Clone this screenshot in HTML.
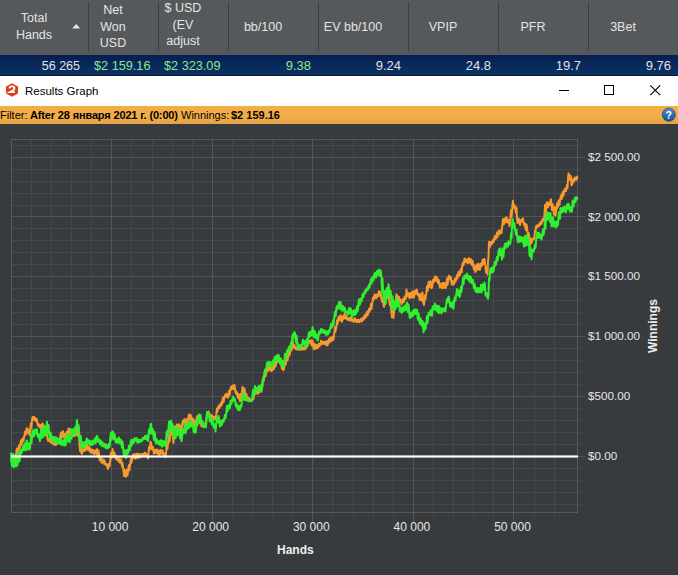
<!DOCTYPE html>
<html><head><meta charset="utf-8"><style>
*{margin:0;padding:0;box-sizing:border-box}
html,body{width:678px;height:575px;overflow:hidden;background:#383b3e;font-family:"Liberation Sans",sans-serif}
.abs{position:absolute}
#hdr{position:absolute;left:0;top:0;width:678px;height:55px;background:#56595b}
.sep{position:absolute;top:2px;width:1px;height:49px;background:#3b3e40}
.ht{position:absolute;color:#e4e4e4;font-size:12.5px;text-align:center;line-height:16.6px;white-space:nowrap}
#row{position:absolute;left:0;top:55px;width:678px;height:21px;background:linear-gradient(#061f52,#0c3264);border-bottom:1px solid #0a1b33}
.dt{position:absolute;top:3px;font-size:13px;color:#e2e2e2;line-height:15px;text-align:right}
.gr{color:#8ee68e}
#title{position:absolute;left:0;top:76px;width:678px;height:30px;background:#fff}
#filter{position:absolute;left:0;top:106px;width:678px;height:18px;background:linear-gradient(#f2ad46,#f2ad48 60%,#e6a244);font-size:11px;color:#000;line-height:18px;white-space:nowrap}
.yl{position:absolute;left:588px;font-size:11.7px;color:#e6e6e6;line-height:14px;white-space:nowrap}
.xl{position:absolute;top:520px;width:60px;text-align:center;font-size:12px;color:#e6e6e6;line-height:14px}
</style></head><body>
<div id="hdr">
  <div class="sep" style="left:88px"></div>
  <div class="sep" style="left:158px"></div>
  <div class="sep" style="left:228px"></div>
  <div class="sep" style="left:318px"></div>
  <div class="sep" style="left:408px"></div>
  <div class="sep" style="left:498px"></div>
  <div class="sep" style="left:588px"></div>
  <div class="ht" style="left:0px;top:10px;width:68px">Total<br>Hands</div>
  <svg class="abs" style="left:71px;top:23px" width="10" height="6"><path d="M1.2,5.5 L5.2,1 L9.2,5.5 Z" fill="#e8e8e8"/></svg>
  <div class="ht" style="left:88px;top:2px;width:50px">Net<br>Won<br>USD</div>
  <div class="ht" style="left:158px;top:0px;width:50px">$ USD<br>(EV<br>adjust</div>
  <div class="ht" style="left:228px;top:19px;width:70px">bb/100</div>
  <div class="ht" style="left:318px;top:19px;width:70px">EV bb/100</div>
  <div class="ht" style="left:408px;top:19px;width:70px">VPIP</div>
  <div class="ht" style="left:498px;top:19px;width:70px">PFR</div>
  <div class="ht" style="left:588px;top:19px;width:70px">3Bet</div>
</div>
<div id="row">
  <div class="dt" style="left:0;width:80px;font-size:12.5px;top:4px">56 265</div>
  <div class="dt gr" style="left:94px;text-align:left;font-size:12.7px;top:4px">$2 159.16</div>
  <div class="dt gr" style="left:164px;text-align:left;font-size:12.7px;top:4px">$2 323.09</div>
  <div class="dt gr" style="left:228px;width:83px">9.38</div>
  <div class="dt" style="left:318px;width:83px">9.24</div>
  <div class="dt" style="left:408px;width:83px">24.8</div>
  <div class="dt" style="left:498px;width:83px">19.7</div>
  <div class="dt" style="left:588px;width:83px">9.76</div>
</div>
<div id="title">
  <svg class="abs" style="left:5px;top:6px" width="14" height="16" viewBox="0 0 14 16">
    <path d="M7,1.2 L13,4.5 L13,11.4 L7,14.7 L1,11.4 L1,4.5 Z" fill="#d83f17"/>
    <path d="M4.4,6.4 Q4.5,4.3 7,4.3 Q9.5,4.3 9.5,6.3 Q9.5,7.6 7.3,8.8 L4.8,10.2 L9.9,10.2" fill="none" stroke="#fff" stroke-width="1.8" stroke-linejoin="miter"/>
  </svg>
  <div class="abs" style="left:25px;top:8px;font-size:11.5px;color:#000;line-height:14px">Results Graph</div>
  <svg class="abs" style="left:552px;top:7px" width="20" height="14"><line x1="7" y1="7.5" x2="17" y2="7.5" stroke="#000" stroke-width="1"/></svg>
  <svg class="abs" style="left:602px;top:7px" width="14" height="14"><rect x="2.5" y="2.5" width="9" height="9" fill="none" stroke="#000" stroke-width="1"/></svg>
  <svg class="abs" style="left:648px;top:7px" width="14" height="14"><path d="M2.3,2.3 L12.2,12.2 M12.2,2.3 L2.3,12.2" stroke="#000" stroke-width="1.1"/></svg>
</div>
<div id="filter">
  <span class="abs" style="left:0px">Filter:</span>
  <span class="abs" style="left:30px;font-weight:bold;letter-spacing:-0.15px">After 28 января 2021 г. (0:00)</span>
  <span class="abs" style="left:181px">Winnings:</span>
  <span class="abs" style="left:231px;font-weight:bold">$2 159.16</span>
  <svg class="abs" style="left:661px;top:1px" width="16" height="16" viewBox="0 0 16 16">
    <defs><linearGradient id="hg" x1="0" y1="0" x2="0" y2="1"><stop offset="0" stop-color="#4d8fd6"/><stop offset="1" stop-color="#134e93"/></linearGradient></defs>
    <circle cx="7.8" cy="7.7" r="6.6" fill="url(#hg)" stroke="#0d3b73" stroke-width="0.6"/>
    <text x="7.8" y="11.6" text-anchor="middle" font-family="Liberation Sans" font-weight="bold" font-size="10.5" fill="#fff">?</text>
  </svg>
</div>
<svg class="abs" style="left:0;top:0" width="678" height="575">
  <line x1="11" y1="504.5" x2="581" y2="504.5" stroke="#45484b" stroke-width="1"/><line x1="11" y1="492.5" x2="581" y2="492.5" stroke="#45484b" stroke-width="1"/><line x1="11" y1="480.5" x2="581" y2="480.5" stroke="#45484b" stroke-width="1"/><line x1="11" y1="468.5" x2="581" y2="468.5" stroke="#45484b" stroke-width="1"/><line x1="11" y1="456.5" x2="585" y2="456.5" stroke="#52565a" stroke-width="1"/><line x1="11" y1="444.5" x2="581" y2="444.5" stroke="#45484b" stroke-width="1"/><line x1="11" y1="432.5" x2="581" y2="432.5" stroke="#45484b" stroke-width="1"/><line x1="11" y1="420.5" x2="581" y2="420.5" stroke="#45484b" stroke-width="1"/><line x1="11" y1="408.5" x2="581" y2="408.5" stroke="#45484b" stroke-width="1"/><line x1="11" y1="396.5" x2="585" y2="396.5" stroke="#52565a" stroke-width="1"/><line x1="11" y1="384.5" x2="581" y2="384.5" stroke="#45484b" stroke-width="1"/><line x1="11" y1="372.5" x2="581" y2="372.5" stroke="#45484b" stroke-width="1"/><line x1="11" y1="360.5" x2="581" y2="360.5" stroke="#45484b" stroke-width="1"/><line x1="11" y1="348.5" x2="581" y2="348.5" stroke="#45484b" stroke-width="1"/><line x1="11" y1="336.5" x2="585" y2="336.5" stroke="#52565a" stroke-width="1"/><line x1="11" y1="324.5" x2="581" y2="324.5" stroke="#45484b" stroke-width="1"/><line x1="11" y1="312.5" x2="581" y2="312.5" stroke="#45484b" stroke-width="1"/><line x1="11" y1="300.5" x2="581" y2="300.5" stroke="#45484b" stroke-width="1"/><line x1="11" y1="288.5" x2="581" y2="288.5" stroke="#45484b" stroke-width="1"/><line x1="11" y1="276.5" x2="585" y2="276.5" stroke="#52565a" stroke-width="1"/><line x1="11" y1="264.5" x2="581" y2="264.5" stroke="#45484b" stroke-width="1"/><line x1="11" y1="252.5" x2="581" y2="252.5" stroke="#45484b" stroke-width="1"/><line x1="11" y1="240.5" x2="581" y2="240.5" stroke="#45484b" stroke-width="1"/><line x1="11" y1="228.5" x2="581" y2="228.5" stroke="#45484b" stroke-width="1"/><line x1="11" y1="216.5" x2="585" y2="216.5" stroke="#52565a" stroke-width="1"/><line x1="11" y1="205.5" x2="581" y2="205.5" stroke="#45484b" stroke-width="1"/><line x1="11" y1="193.5" x2="581" y2="193.5" stroke="#45484b" stroke-width="1"/><line x1="11" y1="181.5" x2="581" y2="181.5" stroke="#45484b" stroke-width="1"/><line x1="11" y1="169.5" x2="581" y2="169.5" stroke="#45484b" stroke-width="1"/><line x1="11" y1="157.5" x2="585" y2="157.5" stroke="#52565a" stroke-width="1"/><line x1="11" y1="145.5" x2="581" y2="145.5" stroke="#45484b" stroke-width="1"/><line x1="31.5" y1="139" x2="31.5" y2="517" stroke="#45484b" stroke-width="1"/><line x1="51.5" y1="139" x2="51.5" y2="517" stroke="#45484b" stroke-width="1"/><line x1="71.5" y1="139" x2="71.5" y2="517" stroke="#45484b" stroke-width="1"/><line x1="91.5" y1="139" x2="91.5" y2="517" stroke="#45484b" stroke-width="1"/><line x1="111.5" y1="139" x2="111.5" y2="521" stroke="#52565a" stroke-width="1"/><line x1="131.5" y1="139" x2="131.5" y2="517" stroke="#45484b" stroke-width="1"/><line x1="152.5" y1="139" x2="152.5" y2="517" stroke="#45484b" stroke-width="1"/><line x1="172.5" y1="139" x2="172.5" y2="517" stroke="#45484b" stroke-width="1"/><line x1="192.5" y1="139" x2="192.5" y2="517" stroke="#45484b" stroke-width="1"/><line x1="212.5" y1="139" x2="212.5" y2="521" stroke="#52565a" stroke-width="1"/><line x1="232.5" y1="139" x2="232.5" y2="517" stroke="#45484b" stroke-width="1"/><line x1="252.5" y1="139" x2="252.5" y2="517" stroke="#45484b" stroke-width="1"/><line x1="272.5" y1="139" x2="272.5" y2="517" stroke="#45484b" stroke-width="1"/><line x1="292.5" y1="139" x2="292.5" y2="517" stroke="#45484b" stroke-width="1"/><line x1="312.5" y1="139" x2="312.5" y2="521" stroke="#52565a" stroke-width="1"/><line x1="332.5" y1="139" x2="332.5" y2="517" stroke="#45484b" stroke-width="1"/><line x1="353.5" y1="139" x2="353.5" y2="517" stroke="#45484b" stroke-width="1"/><line x1="373.5" y1="139" x2="373.5" y2="517" stroke="#45484b" stroke-width="1"/><line x1="393.5" y1="139" x2="393.5" y2="517" stroke="#45484b" stroke-width="1"/><line x1="413.5" y1="139" x2="413.5" y2="521" stroke="#52565a" stroke-width="1"/><line x1="433.5" y1="139" x2="433.5" y2="517" stroke="#45484b" stroke-width="1"/><line x1="453.5" y1="139" x2="453.5" y2="517" stroke="#45484b" stroke-width="1"/><line x1="473.5" y1="139" x2="473.5" y2="517" stroke="#45484b" stroke-width="1"/><line x1="493.5" y1="139" x2="493.5" y2="517" stroke="#45484b" stroke-width="1"/><line x1="513.5" y1="139" x2="513.5" y2="521" stroke="#52565a" stroke-width="1"/><line x1="534.5" y1="139" x2="534.5" y2="517" stroke="#45484b" stroke-width="1"/><line x1="554.5" y1="139" x2="554.5" y2="517" stroke="#45484b" stroke-width="1"/>
  <rect x="11.5" y="139.5" width="566" height="373" fill="none" stroke="#55595c" stroke-width="1"/>
  <path d="M11.0,457.6 L11.5,460.5 L12.0,460.6 L12.5,457.5 L13.0,459.1 L13.5,461.5 L14.0,461.0 L14.5,459.3 L15.0,455.3 L15.5,459.2 L16.0,454.8 L16.5,450.6 L17.0,448.6 L17.5,451.9 L18.0,449.9 L18.5,447.6 L19.0,445.4 L19.5,449.7 L20.0,445.6 L20.5,442.7 L21.0,440.2 L21.5,444.7 L22.0,442.7 L22.5,438.8 L23.0,438.1 L23.5,441.0 L24.0,437.9 L24.5,435.3 L25.0,431.7 L25.5,434.9 L26.0,433.5 L26.5,428.9 L27.0,428.0 L27.5,432.8 L28.0,433.3 L28.5,430.7 L29.0,429.6 L29.5,435.1 L30.0,431.8 L30.5,427.0 L31.0,422.9 L31.5,428.2 L32.0,419.9 L32.5,417.3 L33.0,416.7 L33.5,418.5 L34.0,419.9 L34.5,417.2 L35.0,417.8 L35.5,420.9 L36.0,420.9 L36.5,418.7 L37.0,420.7 L37.5,423.9 L38.0,425.7 L38.5,424.0 L39.0,424.5 L39.5,427.3 L40.0,427.7 L40.5,425.5 L41.0,424.7 L41.5,428.1 L42.0,428.3 L42.5,423.6 L43.0,424.5 L43.5,428.0 L44.0,430.9 L44.5,426.7 L45.0,428.0 L45.5,433.3 L46.0,435.0 L46.5,429.6 L47.0,435.1 L47.5,439.1 L48.0,440.7 L48.5,438.8 L49.0,439.5 L49.5,440.6 L50.0,441.8 L50.5,439.9 L51.0,440.7 L51.5,443.0 L52.0,442.9 L52.5,441.5 L53.0,442.3 L53.5,444.5 L54.0,444.6 L54.5,443.6 L55.0,443.8 L55.5,445.0 L56.0,445.1 L56.5,443.2 L57.0,442.5 L57.5,443.9 L58.0,443.2 L58.5,440.9 L59.0,438.6 L59.5,440.9 L60.0,438.2 L60.5,435.1 L61.0,432.4 L61.5,438.1 L62.0,436.7 L62.5,432.2 L63.0,431.3 L63.5,434.8 L64.0,437.2 L64.5,433.9 L65.0,435.5 L65.5,439.4 L66.0,437.0 L66.5,432.2 L67.0,431.9 L67.5,434.4 L68.0,434.3 L68.5,428.4 L69.0,429.3 L69.5,433.4 L70.0,433.2 L70.5,429.3 L71.0,432.3 L71.5,436.2 L72.0,435.9 L72.5,432.8 L73.0,432.8 L73.5,436.2 L74.0,435.7 L74.5,433.7 L75.0,430.9 L75.5,435.5 L76.0,434.5 L76.5,430.1 L77.0,427.1 L77.5,431.6 L78.0,436.0 L78.5,428.8 L79.0,436.0 L79.5,444.6 L80.0,450.9 L80.5,445.0 L81.0,449.6 L81.5,453.4 L82.0,453.9 L82.5,450.0 L83.0,449.9 L83.5,451.2 L84.0,450.8 L84.5,447.5 L85.0,446.6 L85.5,450.6 L86.0,448.8 L86.5,445.3 L87.0,444.0 L87.5,448.0 L88.0,450.1 L88.5,447.1 L89.0,446.9 L89.5,450.2 L90.0,451.9 L90.5,448.6 L91.0,450.2 L91.5,453.0 L92.0,451.7 L92.5,449.8 L93.0,449.8 L93.5,452.7 L94.0,454.2 L94.5,451.3 L95.0,450.6 L95.5,452.8 L96.0,453.7 L96.5,449.7 L97.0,449.1 L97.5,455.2 L98.0,455.2 L98.5,450.4 L99.0,454.5 L99.5,458.9 L100.0,460.6 L100.5,457.6 L101.0,458.9 L101.5,462.7 L102.0,462.8 L102.5,459.0 L103.0,460.7 L103.5,462.5 L104.0,463.8 L104.5,460.3 L105.0,462.7 L105.5,464.5 L106.0,465.3 L106.5,463.9 L107.0,464.6 L107.5,467.5 L108.0,469.0 L108.5,464.8 L109.0,463.7 L109.5,466.3 L110.0,461.8 L110.5,457.1 L111.0,452.5 L111.5,458.6 L112.0,454.5 L112.5,448.9 L113.0,451.6 L113.5,455.5 L114.0,456.9 L114.5,452.7 L115.0,455.4 L115.5,458.0 L116.0,459.2 L116.5,456.0 L117.0,457.2 L117.5,459.9 L118.0,460.7 L118.5,457.9 L119.0,458.8 L119.5,462.2 L120.0,462.6 L120.5,459.7 L121.0,459.0 L121.5,462.7 L122.0,466.5 L122.5,463.0 L123.0,467.5 L123.5,470.3 L124.0,475.9 L124.5,469.6 L125.0,470.9 L125.5,476.2 L126.0,476.7 L126.5,471.5 L127.0,469.4 L127.5,475.5 L128.0,471.3 L128.5,467.6 L129.0,464.9 L129.5,470.2 L130.0,465.0 L130.5,461.9 L131.0,458.5 L131.5,462.9 L132.0,459.8 L132.5,457.1 L133.0,454.8 L133.5,458.0 L134.0,458.0 L134.5,454.1 L135.0,454.3 L135.5,459.0 L136.0,456.8 L136.5,454.9 L137.0,453.6 L137.5,457.8 L138.0,458.2 L138.5,453.7 L139.0,455.0 L139.5,456.8 L140.0,457.4 L140.5,453.9 L141.0,454.4 L141.5,456.2 L142.0,455.4 L142.5,454.2 L143.0,453.9 L143.5,455.7 L144.0,454.7 L144.5,453.1 L145.0,452.6 L145.5,455.5 L146.0,456.1 L146.5,453.7 L147.0,454.0 L147.5,456.6 L148.0,458.5 L148.5,453.4 L149.0,447.0 L149.5,449.8 L150.0,448.1 L150.5,441.8 L151.0,443.0 L151.5,447.8 L152.0,449.6 L152.5,446.7 L153.0,446.8 L153.5,450.7 L154.0,453.5 L154.5,450.0 L155.0,449.9 L155.5,453.0 L156.0,451.9 L156.5,449.8 L157.0,449.4 L157.5,453.2 L158.0,454.3 L158.5,450.6 L159.0,450.8 L159.5,454.9 L160.0,453.2 L160.5,449.8 L161.0,451.0 L161.5,453.7 L162.0,451.8 L162.5,450.3 L163.0,452.0 L163.5,453.8 L164.0,456.2 L164.5,453.8 L165.0,454.7 L165.5,457.1 L166.0,454.1 L166.5,448.0 L167.0,444.8 L167.5,448.7 L168.0,443.1 L168.5,438.4 L169.0,435.9 L169.5,441.7 L170.0,437.4 L170.5,429.1 L171.0,428.0 L171.5,433.4 L172.0,434.8 L172.5,429.3 L173.0,437.2 L173.5,442.9 L174.0,433.6 L174.5,430.8 L175.0,426.4 L175.5,429.0 L176.0,427.3 L176.5,425.4 L177.0,424.4 L177.5,427.3 L178.0,427.3 L178.5,424.9 L179.0,424.3 L179.5,426.3 L180.0,429.8 L180.5,426.1 L181.0,427.8 L181.5,431.4 L182.0,425.6 L182.5,422.3 L183.0,420.6 L183.5,423.9 L184.0,421.2 L184.5,419.0 L185.0,420.3 L185.5,422.9 L186.0,423.3 L186.5,420.6 L187.0,419.1 L187.5,422.4 L188.0,421.3 L188.5,416.6 L189.0,414.4 L189.5,419.3 L190.0,418.1 L190.5,414.8 L191.0,415.9 L191.5,419.4 L192.0,421.8 L192.5,418.6 L193.0,418.4 L193.5,421.3 L194.0,423.9 L194.5,420.6 L195.0,423.4 L195.5,425.6 L196.0,422.6 L196.5,420.2 L197.0,416.2 L197.5,419.5 L198.0,419.0 L198.5,415.3 L199.0,418.6 L199.5,421.5 L200.0,423.6 L200.5,419.5 L201.0,423.5 L201.5,426.2 L202.0,426.4 L202.5,425.7 L203.0,425.2 L203.5,427.2 L204.0,427.0 L204.5,424.9 L205.0,423.4 L205.5,425.3 L206.0,421.5 L206.5,418.6 L207.0,414.8 L207.5,416.3 L208.0,415.2 L208.5,411.6 L209.0,412.9 L209.5,415.6 L210.0,416.9 L210.5,414.5 L211.0,415.2 L211.5,417.0 L212.0,418.0 L212.5,415.7 L213.0,416.6 L213.5,418.2 L214.0,419.1 L214.5,417.0 L215.0,417.3 L215.5,419.5 L216.0,417.0 L216.5,411.9 L217.0,408.4 L217.5,411.7 L218.0,408.4 L218.5,406.1 L219.0,405.3 L219.5,408.1 L220.0,406.9 L220.5,404.4 L221.0,402.7 L221.5,405.4 L222.0,404.3 L222.5,400.1 L223.0,397.7 L223.5,402.2 L224.0,399.9 L224.5,396.3 L225.0,394.9 L225.5,397.0 L226.0,396.6 L226.5,393.6 L227.0,394.8 L227.5,397.3 L228.0,397.7 L228.5,396.0 L229.0,391.0 L229.5,395.5 L230.0,391.8 L230.5,388.5 L231.0,386.8 L231.5,389.6 L232.0,388.7 L232.5,386.0 L233.0,385.4 L233.5,388.2 L234.0,389.4 L234.5,385.1 L235.0,388.7 L235.5,391.8 L236.0,393.7 L236.5,391.7 L237.0,392.6 L237.5,396.0 L238.0,398.0 L238.5,394.0 L239.0,395.1 L239.5,399.7 L240.0,401.3 L240.5,396.5 L241.0,393.8 L241.5,397.8 L242.0,391.4 L242.5,387.0 L243.0,388.3 L243.5,391.6 L244.0,394.4 L244.5,388.6 L245.0,392.5 L245.5,397.0 L246.0,400.1 L246.5,393.9 L247.0,397.0 L247.5,399.5 L248.0,400.4 L248.5,397.8 L249.0,398.9 L249.5,401.2 L250.0,401.1 L250.5,399.1 L251.0,399.6 L251.5,400.7 L252.0,400.4 L252.5,398.3 L253.0,396.9 L253.5,399.4 L254.0,393.6 L254.5,391.6 L255.0,392.2 L255.5,393.9 L256.0,393.6 L256.5,392.6 L257.0,390.7 L257.5,393.2 L258.0,393.7 L258.5,388.3 L259.0,389.8 L259.5,392.3 L260.0,391.6 L260.5,389.0 L261.0,388.7 L261.5,391.7 L262.0,388.6 L262.5,385.8 L263.0,377.4 L263.5,381.6 L264.0,378.3 L264.5,374.3 L265.0,371.8 L265.5,376.6 L266.0,374.1 L266.5,370.0 L267.0,368.5 L267.5,371.4 L268.0,370.2 L268.5,366.7 L269.0,363.6 L269.5,368.0 L270.0,370.2 L270.5,366.1 L271.0,367.3 L271.5,371.0 L272.0,370.8 L272.5,367.8 L273.0,367.0 L273.5,369.5 L274.0,368.6 L274.5,364.0 L275.0,362.5 L275.5,366.4 L276.0,364.3 L276.5,362.0 L277.0,360.1 L277.5,362.2 L278.0,360.7 L278.5,358.8 L279.0,358.3 L279.5,361.8 L280.0,363.4 L280.5,359.9 L281.0,363.5 L281.5,366.2 L282.0,368.9 L282.5,365.1 L283.0,366.6 L283.5,370.3 L284.0,368.8 L284.5,365.1 L285.0,361.0 L285.5,364.7 L286.0,362.2 L286.5,359.0 L287.0,355.3 L287.5,360.5 L288.0,358.1 L288.5,355.3 L289.0,352.3 L289.5,355.4 L290.0,352.3 L290.5,349.6 L291.0,345.1 L291.5,350.3 L292.0,345.6 L292.5,339.2 L293.0,343.6 L293.5,347.5 L294.0,347.4 L294.5,345.0 L295.0,347.9 L295.5,348.9 L296.0,349.4 L296.5,347.4 L297.0,347.5 L297.5,349.6 L298.0,349.4 L298.5,348.0 L299.0,348.0 L299.5,349.9 L300.0,349.2 L300.5,347.8 L301.0,348.1 L301.5,349.8 L302.0,349.6 L302.5,347.8 L303.0,347.5 L303.5,349.1 L304.0,349.6 L304.5,347.8 L305.0,346.7 L305.5,348.7 L306.0,348.6 L306.5,345.9 L307.0,343.0 L307.5,346.3 L308.0,343.3 L308.5,340.6 L309.0,340.7 L309.5,342.4 L310.0,342.8 L310.5,341.1 L311.0,340.1 L311.5,345.1 L312.0,345.7 L312.5,340.6 L313.0,343.3 L313.5,347.8 L314.0,349.4 L314.5,343.8 L315.0,344.4 L315.5,348.5 L316.0,348.7 L316.5,344.7 L317.0,346.4 L317.5,348.1 L318.0,347.7 L318.5,345.1 L319.0,343.7 L319.5,346.1 L320.0,345.1 L320.5,343.5 L321.0,340.8 L321.5,344.4 L322.0,343.1 L322.5,341.5 L323.0,341.5 L323.5,343.9 L324.0,343.1 L324.5,342.0 L325.0,341.7 L325.5,344.1 L326.0,345.0 L326.5,341.5 L327.0,341.0 L327.5,345.5 L328.0,343.7 L328.5,340.9 L329.0,339.0 L329.5,342.5 L330.0,340.7 L330.5,337.4 L331.0,338.2 L331.5,341.0 L332.0,340.2 L332.5,336.8 L333.0,336.5 L333.5,339.8 L334.0,334.9 L334.5,331.7 L335.0,327.0 L335.5,331.7 L336.0,328.5 L336.5,325.9 L337.0,320.2 L337.5,324.2 L338.0,320.2 L338.5,317.1 L339.0,316.6 L339.5,320.4 L340.0,320.2 L340.5,315.3 L341.0,316.4 L341.5,319.8 L342.0,321.9 L342.5,317.3 L343.0,316.3 L343.5,319.2 L344.0,316.2 L344.5,313.6 L345.0,315.4 L345.5,318.4 L346.0,318.7 L346.5,315.8 L347.0,318.8 L347.5,319.7 L348.0,320.0 L348.5,318.4 L349.0,318.0 L349.5,320.5 L350.0,320.1 L350.5,317.4 L351.0,318.4 L351.5,320.7 L352.0,320.8 L352.5,319.3 L353.0,319.5 L353.5,321.9 L354.0,321.0 L354.5,318.6 L355.0,318.1 L355.5,320.6 L356.0,322.0 L356.5,319.9 L357.0,319.8 L357.5,321.5 L358.0,322.0 L358.5,319.7 L359.0,320.0 L359.5,322.2 L360.0,321.1 L360.5,320.1 L361.0,318.9 L361.5,321.4 L362.0,321.4 L362.5,318.5 L363.0,317.5 L363.5,319.8 L364.0,318.4 L364.5,315.6 L365.0,314.8 L365.5,317.7 L366.0,316.3 L366.5,313.5 L367.0,311.7 L367.5,315.4 L368.0,314.4 L368.5,311.1 L369.0,308.7 L369.5,311.8 L370.0,309.7 L370.5,307.8 L371.0,303.7 L371.5,308.9 L372.0,303.6 L372.5,301.8 L373.0,297.5 L373.5,299.6 L374.0,298.9 L374.5,295.0 L375.0,294.4 L375.5,297.4 L376.0,298.3 L376.5,295.4 L377.0,294.6 L377.5,297.1 L378.0,296.1 L378.5,293.3 L379.0,290.9 L379.5,294.5 L380.0,295.9 L380.5,292.4 L381.0,295.2 L381.5,299.1 L382.0,301.8 L382.5,297.8 L383.0,299.3 L383.5,304.7 L384.0,306.9 L384.5,303.0 L385.0,296.6 L385.5,303.2 L386.0,297.6 L386.5,294.1 L387.0,294.3 L387.5,297.3 L388.0,298.3 L388.5,295.2 L389.0,297.9 L389.5,303.0 L390.0,305.4 L390.5,302.4 L391.0,307.0 L391.5,313.0 L392.0,317.3 L392.5,311.1 L393.0,313.2 L393.5,318.0 L394.0,311.9 L394.5,307.8 L395.0,302.0 L395.5,307.0 L396.0,298.6 L396.5,294.2 L397.0,296.2 L397.5,299.9 L398.0,299.9 L398.5,296.4 L399.0,296.9 L399.5,300.4 L400.0,302.2 L400.5,299.6 L401.0,301.2 L401.5,304.5 L402.0,302.8 L402.5,301.3 L403.0,298.7 L403.5,302.3 L404.0,301.8 L404.5,297.0 L405.0,296.2 L405.5,299.1 L406.0,297.1 L406.5,289.5 L407.0,293.7 L407.5,295.5 L408.0,296.3 L408.5,292.9 L409.0,295.0 L409.5,298.2 L410.0,298.1 L410.5,293.1 L411.0,294.0 L411.5,295.9 L412.0,297.6 L412.5,291.3 L413.0,292.8 L413.5,296.5 L414.0,297.5 L414.5,291.7 L415.0,290.7 L415.5,294.1 L416.0,292.6 L416.5,289.5 L417.0,290.3 L417.5,293.3 L418.0,295.6 L418.5,293.8 L419.0,294.8 L419.5,299.0 L420.0,300.1 L420.5,295.3 L421.0,293.8 L421.5,299.0 L422.0,300.6 L422.5,292.6 L423.0,300.0 L423.5,303.4 L424.0,304.9 L424.5,301.0 L425.0,295.4 L425.5,298.9 L426.0,294.7 L426.5,291.9 L427.0,286.3 L427.5,291.2 L428.0,288.1 L428.5,282.4 L429.0,281.7 L429.5,284.7 L430.0,287.0 L430.5,281.2 L431.0,284.5 L431.5,288.3 L432.0,287.5 L432.5,283.8 L433.0,279.8 L433.5,282.6 L434.0,281.1 L434.5,278.1 L435.0,276.5 L435.5,280.8 L436.0,280.4 L436.5,276.7 L437.0,277.9 L437.5,281.5 L438.0,283.1 L438.5,279.5 L439.0,281.4 L439.5,285.9 L440.0,287.4 L440.5,284.6 L441.0,283.6 L441.5,286.7 L442.0,288.3 L442.5,284.4 L443.0,282.9 L443.5,286.6 L444.0,287.9 L444.5,282.8 L445.0,285.0 L445.5,288.2 L446.0,286.6 L446.5,283.8 L447.0,278.4 L447.5,284.9 L448.0,281.9 L448.5,276.8 L449.0,275.6 L449.5,279.4 L450.0,278.8 L450.5,276.9 L451.0,277.8 L451.5,283.1 L452.0,284.6 L452.5,281.1 L453.0,281.3 L453.5,284.6 L454.0,284.1 L454.5,281.7 L455.0,278.7 L455.5,281.7 L456.0,279.8 L456.5,277.6 L457.0,274.9 L457.5,278.4 L458.0,275.1 L458.5,271.8 L459.0,272.4 L459.5,275.6 L460.0,274.6 L460.5,270.3 L461.0,268.8 L461.5,272.6 L462.0,267.6 L462.5,263.8 L463.0,262.5 L463.5,265.4 L464.0,262.0 L464.5,258.5 L465.0,259.2 L465.5,262.1 L466.0,261.9 L466.5,259.4 L467.0,259.2 L467.5,263.2 L468.0,262.9 L468.5,260.1 L469.0,257.9 L469.5,261.7 L470.0,262.8 L470.5,260.3 L471.0,259.2 L471.5,264.5 L472.0,264.9 L472.5,260.8 L473.0,262.9 L473.5,267.7 L474.0,269.6 L474.5,265.5 L475.0,269.1 L475.5,272.0 L476.0,271.2 L476.5,266.5 L477.0,264.3 L477.5,269.4 L478.0,267.5 L478.5,263.7 L479.0,264.5 L479.5,269.8 L480.0,269.9 L480.5,266.7 L481.0,263.5 L481.5,266.1 L482.0,265.3 L482.5,260.1 L483.0,259.5 L483.5,264.0 L484.0,264.0 L484.5,259.1 L485.0,262.7 L485.5,266.8 L486.0,272.4 L486.5,268.1 L487.0,269.8 L487.5,274.4 L488.0,261.8 L488.5,256.8 L489.0,241.7 L489.5,247.5 L490.0,246.5 L490.5,242.4 L491.0,241.9 L491.5,244.3 L492.0,244.2 L492.5,241.2 L493.0,239.8 L493.5,242.2 L494.0,240.6 L494.5,237.6 L495.0,236.1 L495.5,239.1 L496.0,238.3 L496.5,235.3 L497.0,232.6 L497.5,237.0 L498.0,234.1 L498.5,231.4 L499.0,230.6 L499.5,234.2 L500.0,233.3 L500.5,230.7 L501.0,230.0 L501.5,233.1 L502.0,227.8 L502.5,223.7 L503.0,218.9 L503.5,224.5 L504.0,224.1 L504.5,218.8 L505.0,218.4 L505.5,221.9 L506.0,222.4 L506.5,217.3 L507.0,218.2 L507.5,222.1 L508.0,222.7 L508.5,220.1 L509.0,221.5 L509.5,226.2 L510.0,223.1 L510.5,216.5 L511.0,210.2 L511.5,217.0 L512.0,211.7 L512.5,204.5 L513.0,200.8 L513.5,207.8 L514.0,207.7 L514.5,205.2 L515.0,206.6 L515.5,209.4 L516.0,213.0 L516.5,207.5 L517.0,218.2 L517.5,222.8 L518.0,222.1 L518.5,218.8 L519.0,219.0 L519.5,223.3 L520.0,225.1 L520.5,220.5 L521.0,219.7 L521.5,221.8 L522.0,221.1 L522.5,218.9 L523.0,218.3 L523.5,221.8 L524.0,225.2 L524.5,223.2 L525.0,223.6 L525.5,228.9 L526.0,230.2 L526.5,224.5 L527.0,227.1 L527.5,232.4 L528.0,236.9 L528.5,233.0 L529.0,234.6 L529.5,240.4 L530.0,245.2 L530.5,238.3 L531.0,239.2 L531.5,243.2 L532.0,240.9 L532.5,239.7 L533.0,238.5 L533.5,239.5 L534.0,239.4 L534.5,236.5 L535.0,230.5 L535.5,232.2 L536.0,226.8 L536.5,225.5 L537.0,225.4 L537.5,227.2 L538.0,226.6 L538.5,225.1 L539.0,224.0 L539.5,225.6 L540.0,224.7 L540.5,222.0 L541.0,221.6 L541.5,223.9 L542.0,222.4 L542.5,219.8 L543.0,218.8 L543.5,220.6 L544.0,219.9 L544.5,214.2 L545.0,205.0 L545.5,217.7 L546.0,211.5 L546.5,203.4 L547.0,202.2 L547.5,206.2 L548.0,207.4 L548.5,203.3 L549.0,202.7 L549.5,204.8 L550.0,205.0 L550.5,199.6 L551.0,199.3 L551.5,205.9 L552.0,210.1 L552.5,204.1 L553.0,207.1 L553.5,211.2 L554.0,214.7 L554.5,207.1 L555.0,210.2 L555.5,215.8 L556.0,213.0 L556.5,207.5 L557.0,203.3 L557.5,207.9 L558.0,206.5 L558.5,201.2 L559.0,200.2 L559.5,205.0 L560.0,200.3 L560.5,197.3 L561.0,195.3 L561.5,199.0 L562.0,198.4 L562.5,193.0 L563.0,191.6 L563.5,195.8 L564.0,191.7 L564.5,189.7 L565.0,188.8 L565.5,191.2 L566.0,191.0 L566.5,187.5 L567.0,184.8 L567.5,188.2 L568.0,179.4 L568.5,173.3 L569.0,174.2 L569.5,177.0 L570.0,179.9 L570.5,175.8 L571.0,177.4 L571.5,185.3 L572.0,184.9 L572.5,180.0 L573.0,179.4 L573.5,182.3 L574.0,181.0 L574.5,177.6 L575.0,177.6 L575.5,179.6 L576.0,180.1 L576.5,177.5 L577.0,176.6 L577.5,179.2" fill="none" stroke="#f6992f" stroke-width="2.0" stroke-linejoin="round"/>
  <path d="M11.0,452.6 L11.5,463.2 L12.0,466.2 L12.5,455.6 L13.0,453.7 L13.5,461.7 L14.0,467.1 L14.5,456.1 L15.0,461.7 L15.5,465.7 L16.0,466.4 L16.5,458.2 L17.0,457.1 L17.5,465.3 L18.0,459.9 L18.5,451.6 L19.0,454.9 L19.5,461.4 L20.0,457.8 L20.5,453.4 L21.0,450.0 L21.5,453.0 L22.0,451.7 L22.5,448.3 L23.0,446.3 L23.5,450.3 L24.0,448.0 L24.5,443.4 L25.0,443.8 L25.5,450.5 L26.0,449.6 L26.5,441.0 L27.0,440.4 L27.5,446.2 L28.0,449.4 L28.5,443.3 L29.0,444.8 L29.5,449.4 L30.0,447.3 L30.5,443.0 L31.0,435.1 L31.5,443.1 L32.0,437.0 L32.5,430.3 L33.0,432.5 L33.5,435.3 L34.0,436.5 L34.5,430.5 L35.0,429.4 L35.5,433.1 L36.0,433.7 L36.5,429.6 L37.0,429.1 L37.5,436.5 L38.0,436.9 L38.5,433.9 L39.0,435.5 L39.5,439.8 L40.0,441.1 L40.5,435.7 L41.0,429.0 L41.5,436.0 L42.0,437.9 L42.5,428.6 L43.0,429.3 L43.5,436.8 L44.0,433.8 L44.5,426.0 L45.0,428.0 L45.5,435.3 L46.0,433.7 L46.5,425.1 L47.0,421.7 L47.5,433.3 L48.0,431.4 L48.5,425.1 L49.0,431.0 L49.5,435.3 L50.0,438.5 L50.5,432.4 L51.0,434.2 L51.5,437.6 L52.0,440.0 L52.5,437.1 L53.0,436.7 L53.5,440.8 L54.0,442.1 L54.5,438.1 L55.0,437.1 L55.5,441.9 L56.0,441.5 L56.5,437.5 L57.0,438.9 L57.5,443.2 L58.0,443.1 L58.5,439.6 L59.0,440.3 L59.5,442.7 L60.0,444.0 L60.5,437.8 L61.0,438.9 L61.5,444.9 L62.0,443.5 L62.5,441.3 L63.0,440.5 L63.5,445.2 L64.0,445.2 L64.5,438.9 L65.0,440.6 L65.5,445.4 L66.0,443.4 L66.5,437.2 L67.0,435.1 L67.5,440.3 L68.0,441.2 L68.5,435.1 L69.0,435.3 L69.5,442.2 L70.0,440.8 L70.5,434.7 L71.0,429.2 L71.5,438.6 L72.0,434.7 L72.5,430.0 L73.0,429.2 L73.5,433.7 L74.0,435.3 L74.5,431.0 L75.0,427.3 L75.5,432.8 L76.0,431.2 L76.5,425.0 L77.0,420.0 L77.5,425.9 L78.0,427.5 L78.5,425.0 L79.0,428.7 L79.5,438.6 L80.0,442.1 L80.5,435.8 L81.0,437.2 L81.5,447.9 L82.0,448.1 L82.5,441.9 L83.0,444.0 L83.5,447.3 L84.0,447.4 L84.5,443.1 L85.0,441.9 L85.5,445.0 L86.0,443.1 L86.5,438.8 L87.0,438.5 L87.5,442.6 L88.0,443.7 L88.5,440.2 L89.0,440.2 L89.5,444.7 L90.0,445.0 L90.5,441.1 L91.0,441.6 L91.5,445.0 L92.0,445.0 L92.5,441.4 L93.0,440.7 L93.5,443.8 L94.0,442.6 L94.5,439.7 L95.0,438.3 L95.5,443.4 L96.0,442.1 L96.5,436.9 L97.0,435.9 L97.5,440.1 L98.0,441.5 L98.5,438.6 L99.0,440.6 L99.5,442.7 L100.0,444.2 L100.5,440.3 L101.0,441.2 L101.5,444.9 L102.0,446.0 L102.5,442.3 L103.0,443.8 L103.5,445.5 L104.0,446.7 L104.5,443.9 L105.0,444.5 L105.5,447.1 L106.0,448.2 L106.5,444.6 L107.0,445.3 L107.5,447.4 L108.0,448.3 L108.5,446.0 L109.0,443.7 L109.5,447.0 L110.0,441.2 L110.5,436.0 L111.0,432.7 L111.5,440.1 L112.0,436.3 L112.5,431.2 L113.0,432.5 L113.5,436.9 L114.0,439.5 L114.5,433.8 L115.0,437.2 L115.5,441.4 L116.0,442.6 L116.5,439.0 L117.0,439.6 L117.5,441.4 L118.0,442.8 L118.5,438.4 L119.0,437.6 L119.5,441.8 L120.0,443.6 L120.5,439.5 L121.0,440.2 L121.5,444.2 L122.0,447.8 L122.5,441.5 L123.0,447.1 L123.5,450.7 L124.0,456.6 L124.5,450.1 L125.0,450.7 L125.5,456.1 L126.0,458.1 L126.5,453.9 L127.0,450.0 L127.5,454.0 L128.0,453.2 L128.5,449.3 L129.0,445.8 L129.5,450.5 L130.0,448.6 L130.5,443.7 L131.0,440.0 L131.5,445.8 L132.0,442.8 L132.5,440.0 L133.0,439.7 L133.5,443.3 L134.0,441.8 L134.5,437.9 L135.0,438.8 L135.5,440.2 L136.0,440.7 L136.5,438.1 L137.0,440.1 L137.5,442.8 L138.0,442.5 L138.5,440.0 L139.0,439.5 L139.5,442.0 L140.0,442.0 L140.5,440.1 L141.0,439.9 L141.5,440.9 L142.0,441.3 L142.5,438.2 L143.0,437.8 L143.5,439.2 L144.0,439.0 L144.5,437.2 L145.0,436.1 L145.5,438.9 L146.0,439.1 L146.5,435.2 L147.0,436.9 L147.5,440.2 L148.0,440.9 L148.5,437.2 L149.0,429.6 L149.5,433.9 L150.0,432.4 L150.5,424.7 L151.0,423.9 L151.5,429.0 L152.0,433.8 L152.5,428.7 L153.0,430.4 L153.5,435.7 L154.0,439.7 L154.5,432.1 L155.0,434.1 L155.5,441.5 L156.0,443.4 L156.5,438.9 L157.0,440.6 L157.5,442.8 L158.0,443.6 L158.5,441.5 L159.0,441.1 L159.5,444.7 L160.0,445.0 L160.5,441.0 L161.0,440.1 L161.5,444.3 L162.0,446.8 L162.5,440.7 L163.0,441.2 L163.5,444.5 L164.0,445.3 L164.5,441.3 L165.0,442.5 L165.5,446.5 L166.0,443.5 L166.5,432.5 L167.0,431.3 L167.5,437.3 L168.0,433.0 L168.5,427.3 L169.0,421.5 L169.5,432.4 L170.0,428.2 L170.5,422.3 L171.0,420.6 L171.5,426.3 L172.0,429.5 L172.5,423.7 L173.0,426.5 L173.5,431.1 L174.0,438.6 L174.5,427.5 L175.0,428.9 L175.5,438.3 L176.0,435.6 L176.5,427.8 L177.0,427.1 L177.5,435.4 L178.0,432.5 L178.5,427.5 L179.0,429.3 L179.5,432.3 L180.0,438.3 L180.5,431.4 L181.0,432.7 L181.5,441.3 L182.0,437.7 L182.5,433.8 L183.0,429.6 L183.5,433.1 L184.0,431.5 L184.5,425.7 L185.0,423.4 L185.5,433.2 L186.0,431.0 L186.5,425.5 L187.0,424.4 L187.5,428.9 L188.0,428.6 L188.5,424.0 L189.0,422.7 L189.5,427.6 L190.0,425.0 L190.5,420.8 L191.0,422.7 L191.5,426.3 L192.0,426.3 L192.5,423.0 L193.0,424.4 L193.5,430.9 L194.0,432.4 L194.5,425.7 L195.0,428.3 L195.5,432.7 L196.0,430.3 L196.5,425.5 L197.0,419.5 L197.5,425.3 L198.0,421.0 L198.5,415.9 L199.0,414.4 L199.5,419.9 L200.0,420.9 L200.5,414.9 L201.0,420.4 L201.5,423.5 L202.0,424.3 L202.5,421.0 L203.0,423.9 L203.5,426.4 L204.0,426.3 L204.5,423.6 L205.0,423.8 L205.5,426.7 L206.0,427.3 L206.5,419.7 L207.0,412.0 L207.5,415.3 L208.0,416.1 L208.5,413.3 L209.0,413.4 L209.5,420.6 L210.0,421.7 L210.5,418.0 L211.0,418.0 L211.5,422.4 L212.0,424.5 L212.5,418.6 L213.0,420.8 L213.5,426.5 L214.0,427.5 L214.5,424.2 L215.0,426.5 L215.5,431.4 L216.0,426.7 L216.5,421.1 L217.0,417.5 L217.5,422.1 L218.0,422.4 L218.5,415.8 L219.0,418.7 L219.5,422.9 L220.0,426.6 L220.5,420.9 L221.0,420.7 L221.5,425.3 L222.0,424.5 L222.5,420.3 L223.0,419.8 L223.5,421.9 L224.0,420.3 L224.5,417.2 L225.0,415.0 L225.5,418.4 L226.0,414.9 L226.5,410.8 L227.0,405.7 L227.5,411.2 L228.0,409.1 L228.5,406.6 L229.0,404.9 L229.5,408.6 L230.0,407.9 L230.5,400.9 L231.0,400.5 L231.5,403.9 L232.0,400.7 L232.5,398.1 L233.0,396.6 L233.5,400.4 L234.0,401.0 L234.5,398.6 L235.0,400.0 L235.5,403.6 L236.0,406.6 L236.5,403.4 L237.0,405.3 L237.5,409.2 L238.0,409.8 L238.5,405.7 L239.0,408.0 L239.5,410.2 L240.0,409.4 L240.5,406.2 L241.0,404.8 L241.5,406.5 L242.0,399.4 L242.5,395.9 L243.0,393.2 L243.5,399.2 L244.0,399.7 L244.5,394.5 L245.0,396.4 L245.5,400.3 L246.0,400.2 L246.5,398.6 L247.0,399.1 L247.5,400.5 L248.0,400.7 L248.5,400.0 L249.0,399.9 L249.5,401.0 L250.0,401.2 L250.5,399.7 L251.0,399.5 L251.5,401.1 L252.0,399.0 L252.5,394.8 L253.0,390.0 L253.5,396.6 L254.0,394.0 L254.5,388.8 L255.0,386.1 L255.5,393.2 L256.0,391.1 L256.5,388.4 L257.0,387.8 L257.5,389.8 L258.0,390.0 L258.5,386.1 L259.0,386.0 L259.5,391.3 L260.0,390.2 L260.5,387.6 L261.0,384.8 L261.5,389.7 L262.0,388.0 L262.5,381.2 L263.0,378.8 L263.5,380.5 L264.0,375.9 L264.5,372.5 L265.0,369.6 L265.5,373.4 L266.0,369.9 L266.5,366.9 L267.0,362.6 L267.5,367.1 L268.0,365.0 L268.5,362.2 L269.0,361.7 L269.5,365.9 L270.0,364.3 L270.5,362.1 L271.0,363.0 L271.5,364.9 L272.0,366.2 L272.5,363.8 L273.0,360.6 L273.5,364.9 L274.0,363.0 L274.5,358.4 L275.0,356.4 L275.5,361.7 L276.0,359.5 L276.5,356.8 L277.0,355.2 L277.5,357.4 L278.0,360.1 L278.5,354.7 L279.0,356.9 L279.5,359.5 L280.0,363.6 L280.5,358.9 L281.0,358.4 L281.5,364.1 L282.0,365.1 L282.5,360.8 L283.0,362.5 L283.5,366.9 L284.0,363.5 L284.5,359.9 L285.0,353.8 L285.5,359.2 L286.0,357.1 L286.5,354.1 L287.0,350.5 L287.5,353.2 L288.0,351.3 L288.5,348.3 L289.0,346.9 L289.5,350.1 L290.0,349.8 L290.5,344.9 L291.0,342.7 L291.5,345.1 L292.0,339.0 L292.5,336.0 L293.0,334.0 L293.5,336.0 L294.0,337.8 L294.5,332.1 L295.0,333.8 L295.5,338.1 L296.0,342.6 L296.5,335.5 L297.0,339.1 L297.5,347.8 L298.0,348.3 L298.5,344.2 L299.0,345.9 L299.5,347.7 L300.0,347.5 L300.5,345.9 L301.0,344.8 L301.5,347.5 L302.0,347.0 L302.5,342.2 L303.0,339.7 L303.5,344.1 L304.0,344.3 L304.5,340.7 L305.0,342.5 L305.5,346.7 L306.0,346.0 L306.5,342.7 L307.0,339.0 L307.5,345.5 L308.0,340.9 L308.5,335.0 L309.0,332.2 L309.5,337.1 L310.0,335.5 L310.5,331.8 L311.0,331.5 L311.5,335.2 L312.0,333.3 L312.5,327.1 L313.0,329.6 L313.5,336.0 L314.0,337.2 L314.5,330.8 L315.0,332.4 L315.5,336.7 L316.0,338.1 L316.5,334.3 L317.0,335.0 L317.5,340.4 L318.0,340.0 L318.5,336.0 L319.0,331.8 L319.5,334.0 L320.0,333.3 L320.5,330.6 L321.0,328.9 L321.5,332.5 L322.0,332.0 L322.5,329.5 L323.0,330.3 L323.5,332.9 L324.0,332.6 L324.5,330.2 L325.0,330.9 L325.5,333.4 L326.0,334.8 L326.5,331.9 L327.0,331.2 L327.5,334.6 L328.0,334.2 L328.5,332.7 L329.0,330.2 L329.5,332.1 L330.0,329.3 L330.5,326.9 L331.0,324.1 L331.5,327.7 L332.0,326.7 L332.5,323.1 L333.0,320.4 L333.5,325.4 L334.0,319.1 L334.5,316.2 L335.0,311.5 L335.5,316.5 L336.0,313.1 L336.5,307.1 L337.0,306.1 L337.5,309.2 L338.0,307.2 L338.5,304.7 L339.0,301.9 L339.5,307.4 L340.0,308.7 L340.5,302.1 L341.0,304.4 L341.5,309.7 L342.0,310.7 L342.5,306.9 L343.0,305.8 L343.5,309.1 L344.0,310.8 L344.5,307.4 L345.0,308.6 L345.5,312.5 L346.0,312.8 L346.5,311.7 L347.0,311.3 L347.5,313.4 L348.0,314.5 L348.5,311.6 L349.0,308.3 L349.5,313.3 L350.0,313.2 L350.5,307.9 L351.0,309.7 L351.5,316.4 L352.0,317.1 L352.5,310.9 L353.0,311.1 L353.5,314.9 L354.0,315.1 L354.5,310.1 L355.0,310.8 L355.5,314.4 L356.0,314.0 L356.5,309.5 L357.0,306.3 L357.5,311.5 L358.0,310.2 L358.5,302.0 L359.0,299.2 L359.5,305.2 L360.0,304.1 L360.5,299.0 L361.0,298.5 L361.5,301.6 L362.0,299.4 L362.5,294.7 L363.0,293.6 L363.5,297.1 L364.0,294.1 L364.5,292.0 L365.0,290.5 L365.5,293.0 L366.0,291.0 L366.5,288.7 L367.0,288.4 L367.5,290.2 L368.0,289.6 L368.5,286.0 L369.0,284.8 L369.5,287.7 L370.0,284.4 L370.5,281.7 L371.0,279.0 L371.5,283.5 L372.0,281.1 L372.5,277.0 L373.0,276.5 L373.5,280.6 L374.0,277.1 L374.5,274.1 L375.0,272.8 L375.5,276.8 L376.0,277.6 L376.5,274.2 L377.0,270.9 L377.5,275.5 L378.0,275.3 L378.5,271.7 L379.0,269.6 L379.5,274.1 L380.0,276.0 L380.5,270.5 L381.0,271.7 L381.5,279.2 L382.0,292.2 L382.5,278.6 L383.0,289.1 L383.5,297.8 L384.0,300.4 L384.5,293.0 L385.0,290.9 L385.5,304.1 L386.0,299.1 L386.5,290.1 L387.0,288.0 L387.5,296.3 L388.0,292.8 L388.5,284.2 L389.0,287.9 L389.5,294.1 L390.0,297.5 L390.5,290.7 L391.0,293.8 L391.5,304.3 L392.0,308.8 L392.5,296.3 L393.0,302.5 L393.5,309.0 L394.0,309.8 L394.5,301.3 L395.0,302.9 L395.5,309.1 L396.0,304.2 L396.5,297.9 L397.0,298.3 L397.5,306.4 L398.0,306.1 L398.5,301.2 L399.0,305.3 L399.5,308.4 L400.0,311.2 L400.5,306.9 L401.0,309.3 L401.5,312.7 L402.0,312.5 L402.5,308.9 L403.0,307.4 L403.5,311.0 L404.0,309.9 L404.5,306.0 L405.0,305.6 L405.5,310.3 L406.0,307.8 L406.5,303.8 L407.0,302.5 L407.5,310.7 L408.0,312.1 L408.5,304.6 L409.0,308.7 L409.5,316.5 L410.0,318.1 L410.5,313.6 L411.0,312.6 L411.5,316.6 L412.0,316.8 L412.5,312.5 L413.0,310.8 L413.5,315.2 L414.0,314.6 L414.5,309.7 L415.0,309.4 L415.5,313.7 L416.0,313.7 L416.5,309.8 L417.0,309.8 L417.5,317.7 L418.0,319.8 L418.5,313.2 L419.0,317.3 L419.5,321.7 L420.0,323.7 L420.5,318.2 L421.0,319.9 L421.5,324.6 L422.0,325.9 L422.5,321.1 L423.0,323.1 L423.5,332.3 L424.0,329.3 L424.5,323.6 L425.0,323.7 L425.5,329.2 L426.0,325.4 L426.5,320.8 L427.0,316.0 L427.5,322.9 L428.0,319.8 L428.5,313.2 L429.0,312.6 L429.5,314.8 L430.0,315.2 L430.5,310.4 L431.0,310.2 L431.5,313.9 L432.0,315.9 L432.5,307.2 L433.0,306.2 L433.5,309.8 L434.0,309.6 L434.5,306.1 L435.0,303.5 L435.5,308.4 L436.0,310.6 L436.5,305.4 L437.0,307.4 L437.5,311.1 L438.0,312.5 L438.5,305.8 L439.0,306.2 L439.5,313.1 L440.0,311.3 L440.5,307.9 L441.0,309.7 L441.5,313.4 L442.0,311.1 L442.5,308.6 L443.0,308.4 L443.5,310.9 L444.0,310.7 L444.5,308.5 L445.0,307.8 L445.5,311.5 L446.0,307.0 L446.5,301.9 L447.0,299.1 L447.5,302.4 L448.0,300.3 L448.5,296.4 L449.0,297.4 L449.5,300.9 L450.0,306.6 L450.5,302.7 L451.0,302.9 L451.5,306.1 L452.0,307.5 L452.5,304.9 L453.0,301.4 L453.5,308.7 L454.0,302.7 L454.5,299.0 L455.0,297.4 L455.5,300.7 L456.0,295.5 L456.5,293.3 L457.0,289.1 L457.5,292.6 L458.0,295.3 L458.5,290.3 L459.0,290.8 L459.5,296.9 L460.0,296.2 L460.5,290.3 L461.0,286.8 L461.5,292.0 L462.0,287.7 L462.5,283.3 L463.0,277.9 L463.5,284.2 L464.0,279.0 L464.5,275.4 L465.0,275.6 L465.5,278.2 L466.0,278.1 L466.5,275.0 L467.0,273.6 L467.5,279.0 L468.0,279.4 L468.5,275.7 L469.0,276.0 L469.5,281.5 L470.0,282.1 L470.5,276.4 L471.0,278.1 L471.5,281.7 L472.0,283.4 L472.5,279.8 L473.0,280.0 L473.5,285.9 L474.0,288.3 L474.5,283.5 L475.0,286.8 L475.5,291.1 L476.0,291.7 L476.5,289.7 L477.0,288.0 L477.5,292.6 L478.0,291.7 L478.5,288.0 L479.0,288.5 L479.5,292.1 L480.0,291.8 L480.5,289.1 L481.0,284.8 L481.5,292.5 L482.0,289.0 L482.5,284.7 L483.0,284.4 L483.5,289.8 L484.0,289.6 L484.5,282.6 L485.0,285.7 L485.5,295.3 L486.0,295.8 L486.5,293.0 L487.0,293.4 L487.5,298.0 L488.0,298.7 L488.5,294.9 L489.0,278.0 L489.5,280.8 L490.0,272.1 L490.5,269.0 L491.0,268.2 L491.5,271.7 L492.0,272.8 L492.5,267.6 L493.0,266.7 L493.5,271.5 L494.0,268.8 L494.5,264.3 L495.0,261.8 L495.5,265.2 L496.0,264.5 L496.5,259.8 L497.0,256.9 L497.5,260.8 L498.0,258.1 L498.5,251.6 L499.0,249.2 L499.5,255.2 L500.0,255.4 L500.5,248.3 L501.0,250.6 L501.5,254.4 L502.0,259.6 L502.5,255.7 L503.0,248.6 L503.5,256.8 L504.0,249.4 L504.5,245.7 L505.0,243.7 L505.5,248.3 L506.0,246.4 L506.5,243.1 L507.0,243.1 L507.5,245.2 L508.0,246.8 L508.5,241.2 L509.0,242.1 L509.5,243.9 L510.0,244.1 L510.5,242.3 L511.0,233.3 L511.5,238.3 L512.0,227.2 L512.5,218.9 L513.0,220.7 L513.5,223.7 L514.0,227.7 L514.5,223.4 L515.0,228.8 L515.5,232.0 L516.0,234.7 L516.5,229.7 L517.0,235.3 L517.5,240.1 L518.0,242.4 L518.5,237.5 L519.0,236.3 L519.5,241.7 L520.0,240.8 L520.5,236.8 L521.0,237.2 L521.5,241.6 L522.0,241.1 L522.5,238.0 L523.0,237.5 L523.5,243.7 L524.0,246.6 L524.5,239.0 L525.0,235.8 L525.5,243.2 L526.0,245.8 L526.5,236.5 L527.0,235.7 L527.5,243.7 L528.0,244.9 L528.5,238.4 L529.0,242.8 L529.5,255.2 L530.0,256.1 L530.5,247.5 L531.0,251.2 L531.5,259.3 L532.0,253.1 L532.5,251.4 L533.0,249.6 L533.5,251.7 L534.0,250.5 L534.5,247.0 L535.0,244.4 L535.5,248.0 L536.0,242.0 L536.5,235.4 L537.0,232.6 L537.5,237.2 L538.0,237.8 L538.5,233.4 L539.0,232.7 L539.5,235.8 L540.0,238.0 L540.5,235.3 L541.0,234.5 L541.5,239.6 L542.0,236.5 L542.5,233.1 L543.0,229.4 L543.5,235.0 L544.0,232.0 L544.5,227.9 L545.0,219.1 L545.5,228.8 L546.0,219.5 L546.5,214.5 L547.0,212.3 L547.5,220.0 L548.0,217.4 L548.5,213.0 L549.0,213.7 L549.5,217.3 L550.0,221.9 L550.5,213.0 L551.0,220.3 L551.5,226.3 L552.0,226.2 L552.5,218.9 L553.0,217.3 L553.5,226.6 L554.0,225.7 L554.5,221.4 L555.0,222.2 L555.5,225.9 L556.0,227.7 L556.5,222.2 L557.0,221.4 L557.5,225.8 L558.0,224.8 L558.5,217.3 L559.0,212.2 L559.5,218.8 L560.0,218.6 L560.5,208.2 L561.0,208.1 L561.5,212.7 L562.0,212.4 L562.5,209.5 L563.0,207.6 L563.5,211.6 L564.0,210.1 L564.5,206.4 L565.0,209.0 L565.5,211.8 L566.0,212.3 L566.5,208.3 L567.0,204.4 L567.5,208.7 L568.0,208.9 L568.5,203.8 L569.0,206.1 L569.5,208.9 L570.0,211.7 L570.5,207.1 L571.0,207.4 L571.5,210.0 L572.0,211.7 L572.5,201.2 L573.0,200.5 L573.5,206.6 L574.0,202.2 L574.5,200.2 L575.0,197.6 L575.5,201.9 L576.0,199.6 L576.5,197.2 L577.0,197.5 L577.5,199.5" fill="none" stroke="#2ff02f" stroke-width="2.0" stroke-linejoin="round"/>
  <rect x="11" y="456" width="567" height="1" fill="#ffffff"/><rect x="11" y="455" width="567" height="1" fill="#ffffff" fill-opacity="0.6"/><rect x="11" y="457" width="567" height="1" fill="#ffffff" fill-opacity="0.6"/>
</svg>
<div class="yl" style="top:448.9px">$0.00</div><div class="yl" style="top:389.0px">$500.00</div><div class="yl" style="top:329.2px">$1 000.00</div><div class="yl" style="top:269.3px">$1 500.00</div><div class="yl" style="top:209.5px">$2 000.00</div><div class="yl" style="top:149.6px">$2 500.00</div>
<div class="xl" style="left:80.1px">10 000</div><div class="xl" style="left:180.7px">20 000</div><div class="xl" style="left:281.3px">30 000</div><div class="xl" style="left:381.9px">40 000</div><div class="xl" style="left:482.5px">50 000</div>
<div class="abs" style="left:277px;top:543px;font-size:12px;font-weight:bold;color:#eee;line-height:14px">Hands</div>
<div class="abs" style="left:626px;top:319px;width:54px;font-size:12px;font-weight:bold;color:#eee;line-height:14px;transform:rotate(-90deg);transform-origin:50% 50%;white-space:nowrap">Winnings</div>
</body></html>
